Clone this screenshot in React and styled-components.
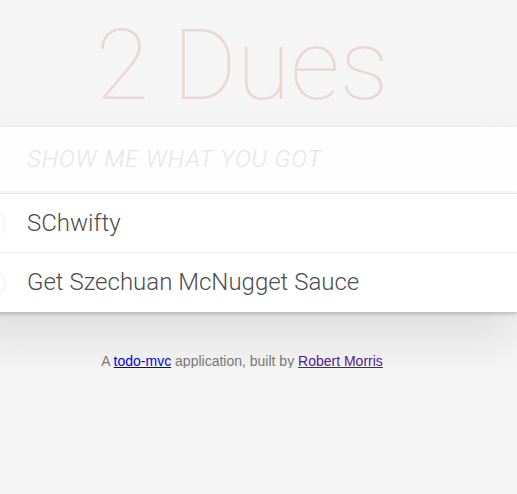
import React from "react";
import styled, { createGlobalStyle } from "styled-components";

const GlobalStyle = createGlobalStyle`
  html, body {
    margin: 0;
    padding: 0;
  }
  body {
    background: #f5f5f5;
    color: #4d4d4d;
    font-family: "Roboto", "Liberation Sans", Arial, sans-serif;
    font-weight: 300;
    overflow: hidden;
  }
`;

// centre line of the app sits at x=242, the 550px app overflows both sides
const Page = styled.div`
  width: 484px;
  display: flex;
  justify-content: center;
`;

const Column = styled.div`
  flex: 0 0 550px;
  width: 550px;
  display: flex;
  flex-direction: column;
`;

const Title = styled.h1`
  margin: 0;
  height: 127px;
  padding-top: 16px;
  box-sizing: border-box;
  text-align: center;
  font-family: "Roboto", "Liberation Sans", sans-serif;
  font-size: 98px;
  font-weight: 100;
  line-height: 100px;
  color: rgba(175, 47, 47, 0.15);
`;

const TodoApp = styled.section`
  background: #fff;
  box-shadow: 0 2px 4px 0 rgba(0, 0, 0, 0.2), 0 25px 50px 0 rgba(0, 0, 0, 0.1);
`;

const NewTodo = styled.input`
  display: block;
  width: 100%;
  box-sizing: border-box;
  margin: 0;
  padding: 16px 16px 16px 60px;
  border: none;
  outline: none;
  background: rgba(0, 0, 0, 0.003);
  box-shadow: inset 0 -2px 1px rgba(0, 0, 0, 0.03);
  font-family: inherit;
  font-weight: 300;
  font-size: 24px;
  line-height: 1.4em;
  color: inherit;

  &::placeholder {
    font-style: italic;
    letter-spacing: 0.9px;
    color: #e6e6e6;
  }
`;

const List = styled.ul`
  margin: 0;
  padding: 0;
  list-style: none;
  border-top: 1px solid #e6e6e6;
`;

const Item = styled.li`
  display: flex;
  align-items: center;
  border-bottom: 1px solid #ededed;

  &:last-child {
    border-bottom: none;
  }
`;

const Toggle = styled.span`
  flex: 0 0 40px;
  height: 40px;
  display: flex;
  align-items: center;
  justify-content: center;
`;

const Label = styled.label`
  flex: 1;
  padding: 15px 15px 15px 20px;
  font-size: 24px;
  line-height: 1.2;
  color: #4d4d4d;
  word-break: break-all;
`;

const Info = styled.footer`
  margin-top: 42px;
  text-align: center;
  font-family: "Liberation Sans", Arial, sans-serif;
  font-size: 14px;
  line-height: 1;
  color: #777;

  a {
    color: #0000ee;
  }
  a.visited {
    color: #551a8b;
  }
`;

const todos = ["SChwifty", "Get Szechuan McNugget Sauce"];

function Circle() {
  return (
    <svg width="40" height="40" viewBox="-10 -18 100 135">
      <circle cx="50" cy="50" r="50" fill="none" stroke="#ededed" strokeWidth="3" />
    </svg>
  );
}

export default function App() {
  return (
    <>
      <GlobalStyle />
      <Page>
        <Column>
          <Title>2 Dues</Title>
          <TodoApp>
            <NewTodo placeholder="SHOW ME WHAT YOU GOT" />
            <List>
              {todos.map((t) => (
                <Item key={t}>
                  <Toggle>
                    <Circle />
                  </Toggle>
                  <Label>{t}</Label>
                </Item>
              ))}
            </List>
          </TodoApp>
          <Info>
            A <a href="#todo">todo-mvc</a> application, built by{" "}
            <a className="visited" href="#author">Robert Morris</a>
          </Info>
        </Column>
      </Page>
    </>
  );
}
